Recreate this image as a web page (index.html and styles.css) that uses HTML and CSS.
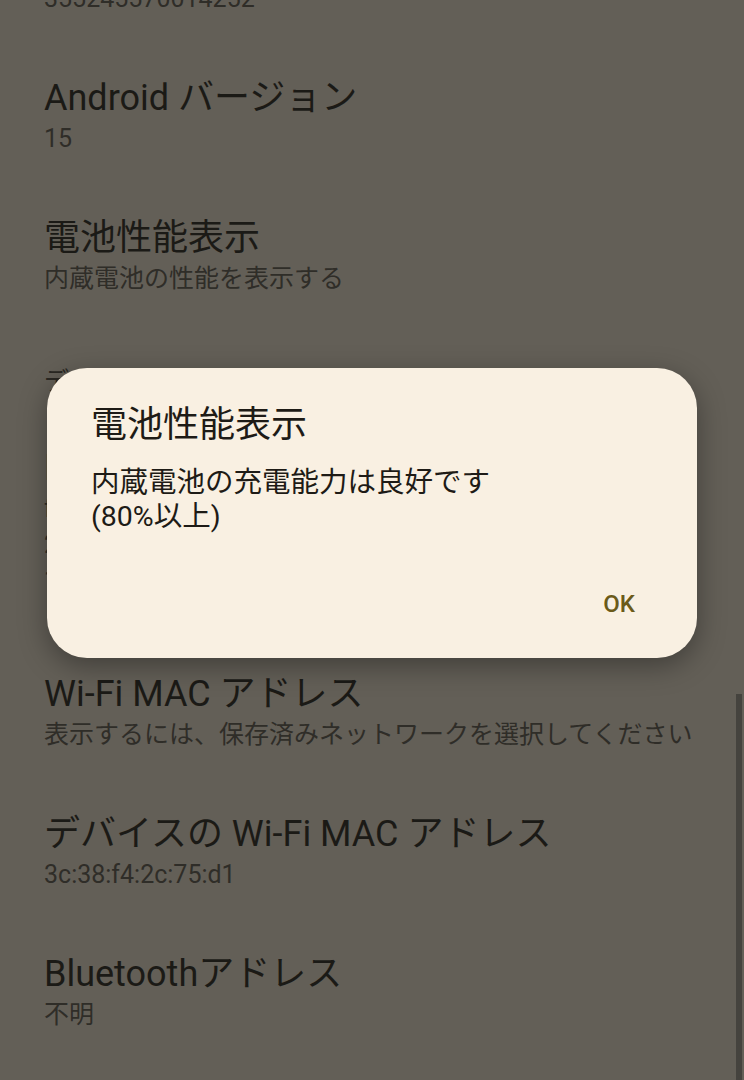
FILE: index.html
```html
<!DOCTYPE html>
<html lang="ja">
<head>
<meta charset="utf-8">
<link rel="stylesheet" href="styles.css">
</head>
<body>
<div class="screen">
  <div class="list">
    <div class="item">
      <div class="title">IMEI</div>
      <div class="sub">355245570014252</div>
    </div>
    <div class="item">
      <div class="title">Android バージョン</div>
      <div class="sub">15</div>
    </div>
    <div class="item">
      <div class="title">電池性能表示</div>
      <div class="sub">内蔵電池の性能を表示する</div>
    </div>
    <div class="category">デバイス ID</div>
    <div class="item item-tall">
      <div class="title">IP アドレス</div>
      <div class="sub">fe80::3e38:f4ff:fe2c:75d1<br>2400:4051:2a0:1c00::5<br>192.168.1.12</div>
    </div>
    <div class="item">
      <div class="title">Wi-Fi MAC アドレス</div>
      <div class="sub">表示するには、保存済みネットワークを選択してください</div>
    </div>
    <div class="item">
      <div class="title">デバイスの Wi-Fi MAC アドレス</div>
      <div class="sub">3c:38:f4:2c:75:d1</div>
    </div>
    <div class="item">
      <div class="title">Bluetoothアドレス</div>
      <div class="sub">不明</div>
    </div>
  </div>
  <div class="scrollbar"></div>
  <div class="dialog">
    <div class="dialog-title">電池性能表示</div>
    <div class="dialog-body">内蔵電池の充電能力は良好です<br>(80%以上)</div>
    <div class="dialog-actions">
      <span class="btn">OK</span>
    </div>
  </div>
</div>
</body>
</html>
```
FILE: styles.css
```css
html, body {
  margin: 0;
  padding: 0;
}
body {
  background: #635f57;
  font-family: Roboto, "Noto Sans CJK JP", sans-serif;
  color: #1b1a16;
  overflow: hidden;
}
.screen {
  position: relative;
  width: 744px;
  height: 1080px;
  overflow: hidden;
}
.list {
  margin-top: -94px;
  display: flex;
  flex-direction: column;
}
.item {
  padding: 29px 44px;
  display: flex;
  flex-direction: column;
}
.title {
  font-size: 36px;
  line-height: 46px;
  color: #1b1a16;
  white-space: nowrap;
}
.sub {
  font-size: 25px;
  line-height: 36px;
  color: #2f2d28;
  white-space: nowrap;
}
.item-tall {
  padding-bottom: 43px;
}
.category {
  padding: 40px 44px 18px;
  font-size: 25px;
  line-height: 32px;
  color: #2a2823;
}
.scrollbar {
  position: absolute;
  right: 2px;
  top: 694px;
  width: 6px;
  bottom: 0;
  background: #45433e;
}
.dialog {
  position: absolute;
  left: 47px;
  top: 368px;
  width: 650px;
  height: 290px;
  box-sizing: border-box;
  background: #f9f0e2;
  border-radius: 40px;
  box-shadow: 0 8px 28px rgba(0, 0, 0, 0.35);
  padding: 35px 44px 0;
  display: flex;
  flex-direction: column;
}
.dialog-title {
  font-size: 36px;
  line-height: 44px;
  color: #1e1b16;
}
.dialog-body {
  margin-top: 19px;
  font-size: 28.5px;
  line-height: 34px;
  color: #1e1b16;
}
.dialog-actions {
  margin-top: auto;
  display: flex;
  justify-content: flex-end;
  padding-bottom: 36px;
  padding-right: 18px;
}
.btn {
  font-size: 24px;
  line-height: 36px;
  font-weight: 500;
  color: #6b5a19;
}
```
